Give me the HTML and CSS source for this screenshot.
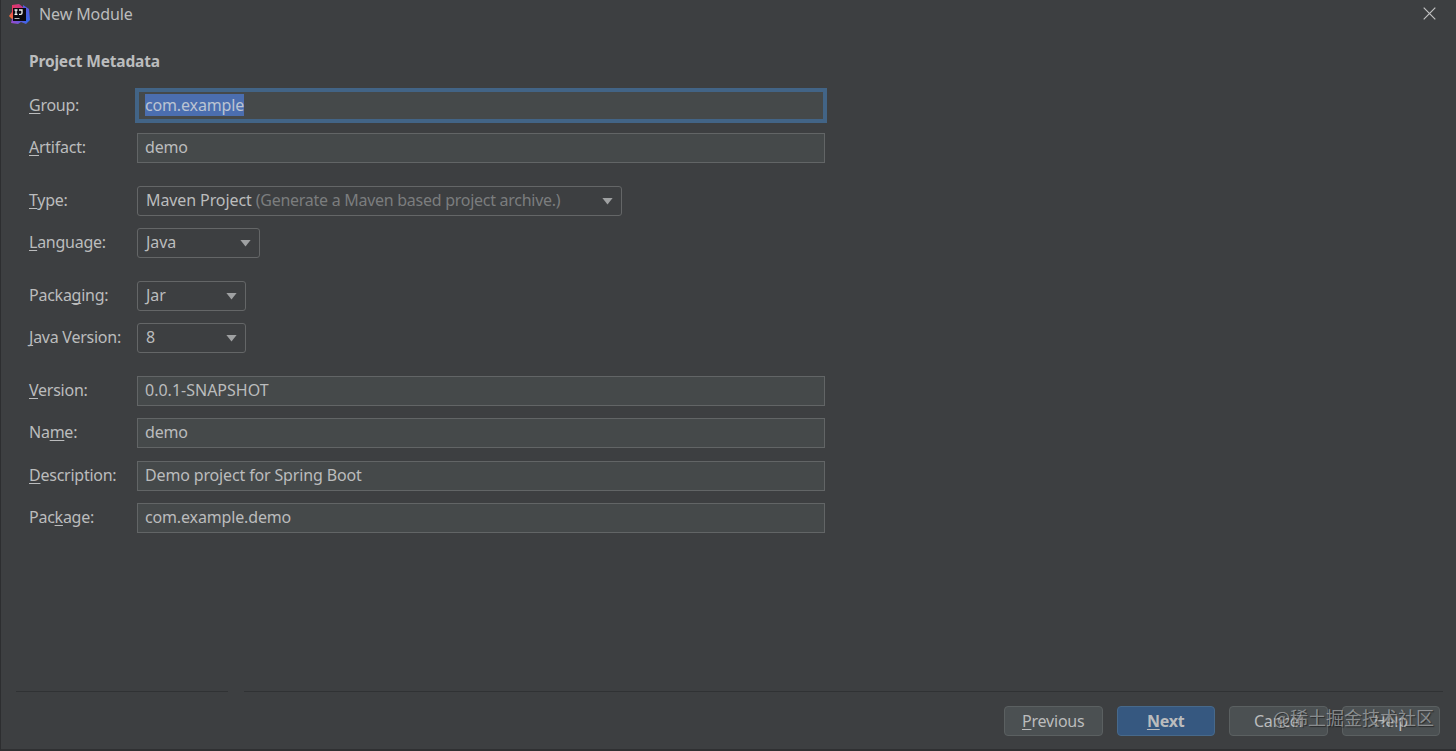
FILE: index.html
```html
<!DOCTYPE html>
<html lang="en">
<head>
<meta charset="utf-8">
<title>New Module</title>
<link rel="stylesheet" href="styles.css">
</head>
<body>
<div class="dialog">
  <header class="titlebar">
    <svg class="logo" viewBox="0 0 21 21" width="21" height="21">
      <defs>
        <linearGradient id="warm" x1="0" y1="1" x2="1" y2="0"><stop offset="0" stop-color="#f58529"/><stop offset=".45" stop-color="#ee3a60"/><stop offset="1" stop-color="#b63590"/></linearGradient>
        <linearGradient id="cool" x1="0" y1="1" x2="1" y2="0"><stop offset="0" stop-color="#a645c8"/><stop offset=".5" stop-color="#3568e8"/><stop offset="1" stop-color="#6752d8"/></linearGradient>
      </defs>
      <path fill="url(#warm)" d="M3 1 10 0 15 4 10 12 4 16 0 12 3 8Z"/>
      <path fill="url(#cool)" d="M14 1 20 5 21 16 17 20 12 18 9 20 2 19 3 15 14 9Z"/>
      <path fill="#0b0910" d="M4 4h13v13H4z"/>
      <path fill="none" stroke="#f4f4f4" stroke-width="1.3" d="M5.5 6h3M7 6v4M5.5 10.300h3M10 6h3v3q0 1.300-1.300 1.300H10"/>
      <path fill="#b5b5b5" d="M5.500 14h5v1h-5z"/>
    </svg>
    <span class="title">New Module</span>
    <svg class="close" viewBox="0 0 13 13" width="13" height="13"><path d="M.7.7 12.300 12.300M12.300.7.7 12.300"/></svg>
  </header>
  <main class="content">
    <h1 class="heading">Project Metadata</h1>
    <form class="form">
      <div class="row"><label class="label"><u>G</u>roup:</label><div class="field focused"><span class="selection">com.example</span></div></div>
      <div class="row"><label class="label"><u>A</u>rtifact:</label><div class="field">demo</div></div>
      <div class="row spaced"><label class="label"><u>T</u>ype:</label><div class="combo wide"><span class="value">Maven Project <span class="hint">(Generate a Maven based project archive.)</span></span><i class="arrow"></i></div></div>
      <div class="row"><label class="label"><u>L</u>anguage:</label><div class="combo medium"><span class="value">Java</span><i class="arrow"></i></div></div>
      <div class="row spaced"><label class="label">Packa<u>g</u>ing:</label><div class="combo"><span class="value">Jar</span><i class="arrow"></i></div></div>
      <div class="row"><label class="label"><u>J</u>ava Version:</label><div class="combo"><span class="value">8</span><i class="arrow"></i></div></div>
      <div class="row spaced"><label class="label"><u>V</u>ersion:</label><div class="field version">0.0.1-SNAPSHOT</div></div>
      <div class="row"><label class="label">Na<u>m</u>e:</label><div class="field">demo</div></div>
      <div class="row nudge"><label class="label"><u>D</u>escription:</label><div class="field">Demo project for Spring Boot</div></div>
      <div class="row"><label class="label">Pac<u>k</u>age:</label><div class="field">com.example.demo</div></div>
    </form>
  </main>
  <div class="divider"><span class="line short"></span><span class="line"></span></div>
  <footer class="buttons">
    <span class="button"><span><u>P</u>revious</span></span>
    <span class="button primary"><span><u>N</u>ext</span></span>
    <span class="button">Cancel</span>
    <span class="button">Help</span>
  </footer>
  <div class="watermark">@稀土掘金技术社区</div>
</div>
</body>
</html>
```

FILE: styles.css
```css
* { box-sizing: border-box; }
body { margin: 0; background: #3d3f41; }
.dialog {
  position: relative;
  display: flex;
  flex-direction: column;
  width: 1456px;
  height: 751px;
  overflow: hidden;
  border-left: 1px solid #2d2e30;
  border-bottom: 2px solid #2f3032;
  background: #3d3f41;
  color: #bbbcbd;
  font: 16px/22px "Noto Sans", "Open Sans", sans-serif;
  white-space: nowrap;
}
.titlebar { display: flex; align-items: center; height: 29px; padding: 0 20px 0 8px; }
.logo { margin-right: 9px; }
.title { padding-bottom: 2px; letter-spacing: -.1px; }
.close { margin: -2px 0 0 auto; fill: none; stroke: #c2c2c2; stroke-width: 1.2; }
.content { flex: 1; padding: 0 28px; }
.heading { margin: 21px 0 19px; font-size: 15.500px; line-height: 22px; letter-spacing: -.17px; }
.row { display: flex; align-items: center; height: 30px; margin-bottom: 12px; }
.row.spaced { margin-top: 23px; }
.row.nudge { margin-top: 13px; }
.label { width: 108px; padding-bottom: 2px; letter-spacing: -.25px; }
u { text-decoration-thickness: 1px; text-underline-offset: 2px; text-decoration-skip-ink: none; }
.field {
  display: flex;
  align-items: center;
  width: 688px;
  height: 30px;
  padding: 0 7px 2px;
  border: 1px solid #626566;
  background: #45494a;
  letter-spacing: -.15px;
}
.field.version { letter-spacing: 0; }
.field.focused { width: 692px; height: 35px; margin: -1px 0 0 -2px; padding-left: 6px; border: 4px solid #426486; }
.selection { background: #4b6eaf; color: #bbc4d2; }
.combo {
  display: flex;
  align-items: center;
  justify-content: space-between;
  width: 109px;
  height: 30px;
  padding: 0 8px;
  border: 1px solid #646667;
  border-radius: 3px;
}
.combo.medium { width: 123px; }
.combo.wide { width: 485px; }
.value { padding-bottom: 2px; letter-spacing: -.1px; }
.hint { color: #7b7d7e; letter-spacing: -.27px; }
.arrow { width: 11px; height: 7px; background: #9fa1a2; clip-path: polygon(0 0, 100% 0, 50% 100%); }
.divider { display: flex; gap: 16px; padding: 0 13px 0 15px; }
.line { flex: 1; height: 1px; background: #303234; }
.line.short { flex: 0 0 212px; }
.buttons { display: flex; justify-content: flex-end; gap: 14px; height: 57px; padding: 14px 16px 0 0; }
.button {
  display: flex;
  align-items: center;
  justify-content: center;
  width: 98.500px;
  height: 30px;
  border: 1px solid #5b6061;
  border-radius: 4px;
  background: #4b5052;
  letter-spacing: -.2px;
}
.button.primary { border-color: #47698b; background: #365880; font-weight: 700; }
.watermark {
  position: absolute;
  right: 22px;
  top: 704px;
  color: rgba(190, 192, 194, .62);
  font: 18px/26px "Noto Sans CJK SC", sans-serif;
  text-shadow: 1px 1px 1px rgba(20, 20, 20, .6);
}
```
